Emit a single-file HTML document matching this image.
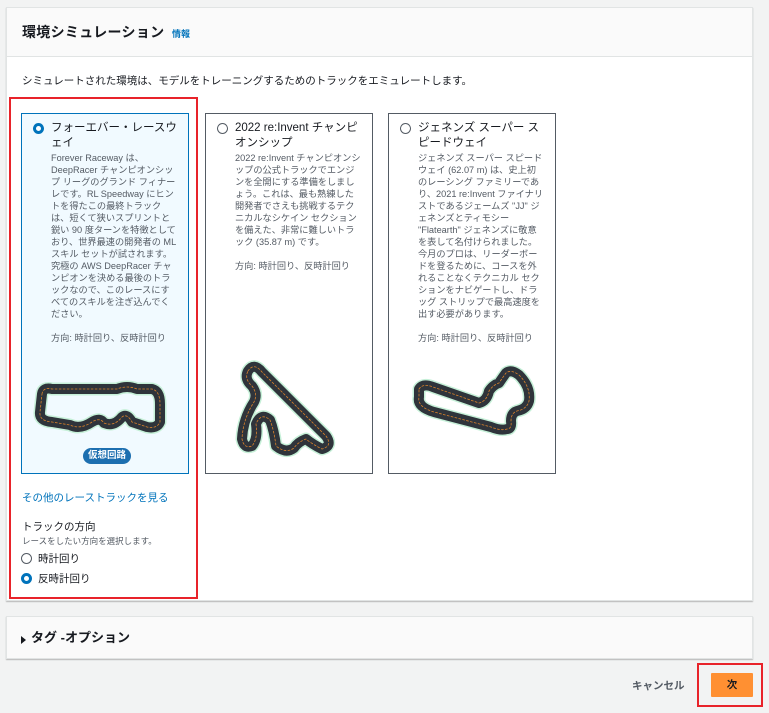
<!DOCTYPE html>
<html><head><meta charset="utf-8"><style>
*{box-sizing:border-box;margin:0;padding:0}
body{width:769px;height:713px;background:#f2f3f3;font-family:"Liberation Sans","Noto Sans CJK JP",sans-serif;color:#16191f;position:relative;overflow:hidden}
.abs{position:absolute}
.panel{left:6px;top:7px;width:747px;height:594px;background:#fff;border:1px solid #e1e4e4;box-shadow:0 1px 1px rgba(0,0,0,.25)}
.hdr{left:0;top:0;width:745px;height:49px;background:#fafafa;border-bottom:1px solid #e1e4e4}
.card{width:168px;height:361px;border:1px solid #545b64;background:#fff;top:106px}
.card.sel{background:#f1faff;border-color:#0073bb}
.ttl{position:absolute;left:29px;top:7px;width:128px;font-size:11.5px;line-height:15px;color:#16191f}
.desc{position:absolute;left:29px;top:38px;width:127px;font-size:9.2px;line-height:12px;color:#545b64}
.rad{position:absolute;width:11px;height:11px;border-radius:50%;border:1.3px solid #545b64;background:#fff}
.rad.on{border:3px solid #0073bb}
svg{position:absolute}
.g{stroke:#c6f0d8;stroke-width:13}
.k{stroke:#2f343b;stroke-width:10}
.o{stroke:#d9822b;stroke-width:.8;stroke-dasharray:2 2}
</style></head><body>
<div class="abs panel">
 <div class="abs hdr">
  <div class="abs" style="left:15px;top:14px;font-size:14px;font-weight:bold;letter-spacing:0.3px">環境シミュレーション</div>
  <div class="abs" style="left:165px;top:19px;font-size:9px;color:#0073bb;font-weight:bold">情報</div>
 </div>
 <div class="abs" style="left:15px;top:65px;font-size:10.5px;color:#16191f">シミュレートされた環境は、モデルをトレーニングするためのトラックをエミュレートします。</div>
</div>

<div class="abs card sel" style="left:21px;top:113px">
 <div class="rad on" style="left:11px;top:9px"></div>
 <div class="ttl">フォーエバー・レースウェイ</div>
 <div class="desc">Forever Raceway は、DeepRacer チャンピオンシップ リーグのグランド フィナーレです。RL Speedway にヒントを得たこの最終トラックは、短くて狭いスプリントと鋭い 90 度ターンを特徴としており、世界最速の開発者の ML スキル セットが試されます。究極の AWS DeepRacer チャンピオンを決める最後のトラックなので、このレースにすべてのスキルを注ぎ込んでください。<br><br>方向: 時計回り、反時計回り</div>
 <svg width="168" height="361" viewBox="0 0 168 361"><g fill="none" stroke-linejoin="round" stroke-linecap="round">
 <path class="g" d="M20 280 Q21 273 30 275 L95 275 Q105 271 115 275 L130 275 Q138 277 138 290 L138 308 Q135 315 125 313 L110 308 Q105 299 100 303 Q92 313 82 309 Q78 303 70 308 Q58 316 48 311 L30 308 Q17 307 18 298 Z"/>
 <path class="k" d="M20 280 Q21 273 30 275 L95 275 Q105 271 115 275 L130 275 Q138 277 138 290 L138 308 Q135 315 125 313 L110 308 Q105 299 100 303 Q92 313 82 309 Q78 303 70 308 Q58 316 48 311 L30 308 Q17 307 18 298 Z"/>
 <path class="o" d="M20 280 Q21 273 30 275 L95 275 Q105 271 115 275 L130 275 Q138 277 138 290 L138 308 Q135 315 125 313 L110 308 Q105 299 100 303 Q92 313 82 309 Q78 303 70 308 Q58 316 48 311 L30 308 Q17 307 18 298 Z"/></g></svg>
 <div class="abs" style="left:61px;top:334px;width:48px;height:16px;border-radius:8px;background:#1d6fb0;color:#fff;font-size:9.5px;font-weight:bold;text-align:center;line-height:16px">仮想回路</div>
</div>

<div class="abs card" style="left:205px;top:113px">
 <div class="rad" style="left:11px;top:9px"></div>
 <div class="ttl">2022 re:Invent チャンピオンシップ</div>
 <div class="desc">2022 re:Invent チャンピオンシップの公式トラックでエンジンを全開にする準備をしましょう。これは、最も熟練した開発者でさえも挑戦するテクニカルなシケイン セクションを備えた、非常に難しいトラック (35.87 m) です。<br><br>方向: 時計回り、反時計回り</div>
 <svg width="168" height="361" viewBox="0 0 168 361"><g fill="none" stroke-linejoin="round" stroke-linecap="round">
 <path class="g" d="M42 257 Q48 248 56 258 L120 322 Q127 332 116 335 Q106 330 100 325 Q92 328 88 334 Q80 340 70 332 Q68 316 64 306 Q55 298 50 310 Q52 325 46 332 Q38 335 36 325 Q37 305 48 288 Q52 280 46 272 Q38 265 42 257 Z"/>
 <path class="k" d="M42 257 Q48 248 56 258 L120 322 Q127 332 116 335 Q106 330 100 325 Q92 328 88 334 Q80 340 70 332 Q68 316 64 306 Q55 298 50 310 Q52 325 46 332 Q38 335 36 325 Q37 305 48 288 Q52 280 46 272 Q38 265 42 257 Z"/>
 <path class="o" d="M42 257 Q48 248 56 258 L120 322 Q127 332 116 335 Q106 330 100 325 Q92 328 88 334 Q80 340 70 332 Q68 316 64 306 Q55 298 50 310 Q52 325 46 332 Q38 335 36 325 Q37 305 48 288 Q52 280 46 272 Q38 265 42 257 Z"/></g></svg>
</div>

<div class="abs card" style="left:388px;top:113px">
 <div class="rad" style="left:11px;top:9px"></div>
 <div class="ttl">ジェネンズ スーパー スピードウェイ</div>
 <div class="desc">ジェネンズ スーパー スピードウェイ (62.07 m) は、史上初のレーシング ファミリーであり、2021 re:Invent ファイナリストであるジェームズ "JJ" ジェネンズとティモシー "Flatearth" ジェネンズに敬意を表して名付けられました。今月のプロは、リーダーボードを登るために、コースを外れることなくテクニカル セクションをナビゲートし、ドラッグ ストリップで最高速度を出す必要があります。<br><br>方向: 時計回り、反時計回り</div>
 <svg width="168" height="361" viewBox="0 0 168 361"><g fill="none" stroke-linejoin="round" stroke-linecap="round">
 <path class="g" d="M30 275 Q34 269 44 273 L90 289 Q98 287 100 277 Q104 271 110 269 Q114 263 117 259 Q122 255 130 261 Q142 273 140 287 Q138 295 128 297 Q122 299 122 307 Q123 315 118 315 Q112 317 102 313 L45 298 Q28 293 30 283 Z"/>
 <path class="k" d="M30 275 Q34 269 44 273 L90 289 Q98 287 100 277 Q104 271 110 269 Q114 263 117 259 Q122 255 130 261 Q142 273 140 287 Q138 295 128 297 Q122 299 122 307 Q123 315 118 315 Q112 317 102 313 L45 298 Q28 293 30 283 Z"/>
 <path class="o" d="M30 275 Q34 269 44 273 L90 289 Q98 287 100 277 Q104 271 110 269 Q114 263 117 259 Q122 255 130 261 Q142 273 140 287 Q138 295 128 297 Q122 299 122 307 Q123 315 118 315 Q112 317 102 313 L45 298 Q28 293 30 283 Z"/></g></svg>
</div>

<div class="abs" style="left:22px;top:490px;font-size:10.5px;color:#0073bb">その他のレーストラックを見る</div>
<div class="abs" style="left:22px;top:519px;font-size:10.5px">トラックの方向</div>
<div class="abs" style="left:22px;top:535px;font-size:8.5px;color:#545b64">レースをしたい方向を選択します。</div>
<div class="rad" style="left:21px;top:553px"></div>
<div class="abs" style="left:38px;top:551px;font-size:10.5px">時計回り</div>
<div class="rad on" style="left:21px;top:573px"></div>
<div class="abs" style="left:38px;top:571px;font-size:10.5px">反時計回り</div>

<div class="abs" style="left:9px;top:97px;width:189px;height:502px;border:2px solid #e8232a"></div>

<div class="abs" style="left:6px;top:616px;width:747px;height:43px;background:#fafafa;border:1px solid #e1e4e4;box-shadow:0 1px 1px rgba(0,0,0,.25)">
 <div class="abs" style="left:14px;top:19px;width:0;height:0;border-left:5px solid #16191f;border-top:4px solid transparent;border-bottom:4px solid transparent"></div>
 <div class="abs" style="left:24px;top:10px;font-size:13px;font-weight:bold">タグ -オプション</div>
</div>

<div class="abs" style="left:632px;top:678px;font-size:10.5px;font-weight:bold;color:#545b64">キャンセル</div>
<div class="abs" style="left:711px;top:673px;width:42px;height:24px;background:#ff9032;border-radius:1px;font-size:10.5px;font-weight:bold;text-align:center;line-height:24px">次</div>
<div class="abs" style="left:697px;top:663px;width:66px;height:44px;border:2px solid #e8232a"></div>
</body></html>
